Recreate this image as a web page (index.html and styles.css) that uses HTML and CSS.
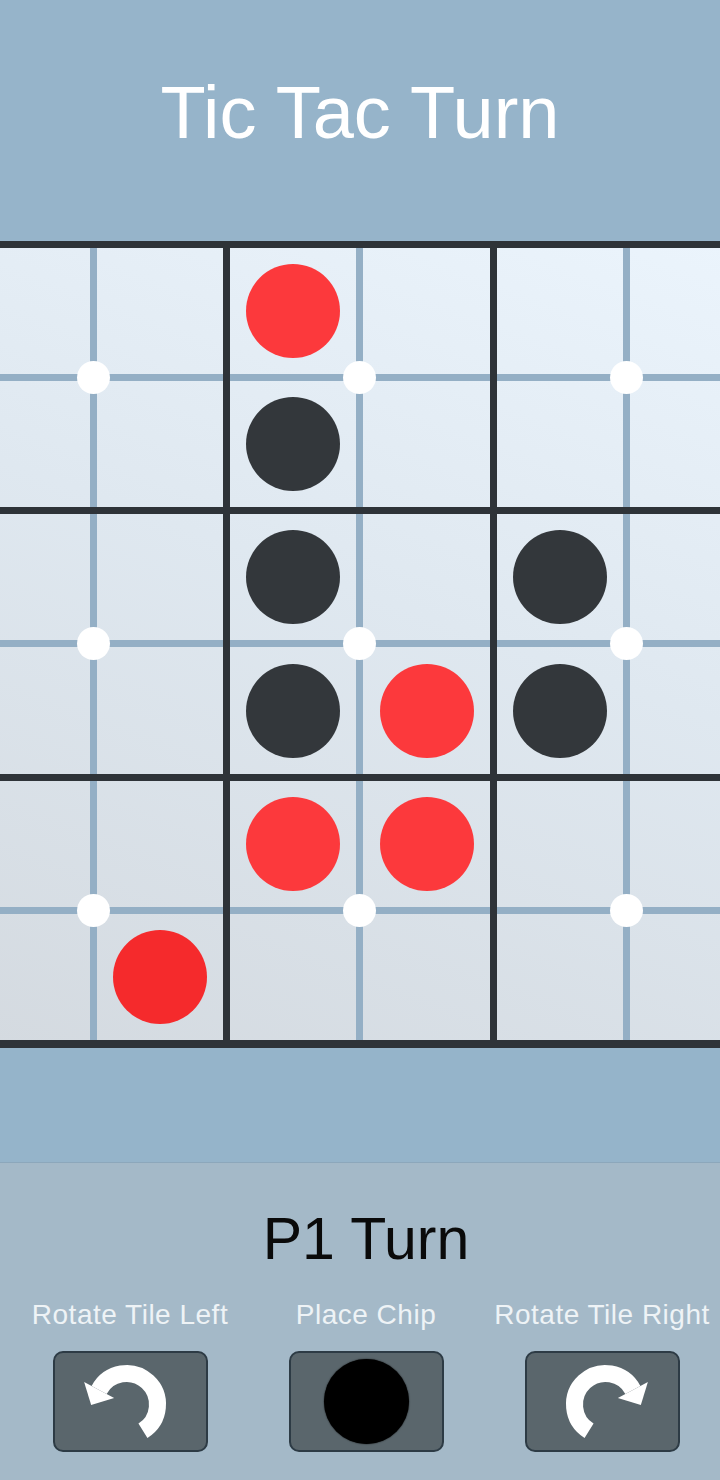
FILE: index.html
```html
<!DOCTYPE html>
<html>
<head>
<meta charset="utf-8">
<title>Tic Tac Turn</title>
<link rel="stylesheet" href="styles.css">
</head>
<body>
<div class="app">
  <header class="header">
    <h1 class="title">Tic Tac Turn</h1>
  </header>

  <div class="board-wrap">
    <div class="board">
      <!-- row 0 -->
      <div class="tile">
        <div class="cell"></div><div class="cell"></div>
        <div class="cell"></div><div class="cell"></div>
        <span class="dot"></span>
      </div>
      <div class="tile">
        <div class="cell"><span class="chip red"></span></div><div class="cell"></div>
        <div class="cell"><span class="chip black"></span></div><div class="cell"></div>
        <span class="dot"></span>
      </div>
      <div class="tile">
        <div class="cell"></div><div class="cell"></div>
        <div class="cell"></div><div class="cell"></div>
        <span class="dot"></span>
      </div>
      <!-- row 1 -->
      <div class="tile">
        <div class="cell"></div><div class="cell"></div>
        <div class="cell"></div><div class="cell"></div>
        <span class="dot"></span>
      </div>
      <div class="tile">
        <div class="cell"><span class="chip black"></span></div><div class="cell"></div>
        <div class="cell"><span class="chip black"></span></div><div class="cell"><span class="chip red"></span></div>
        <span class="dot"></span>
      </div>
      <div class="tile">
        <div class="cell"><span class="chip black"></span></div><div class="cell"></div>
        <div class="cell"><span class="chip black"></span></div><div class="cell"></div>
        <span class="dot"></span>
      </div>
      <!-- row 2 -->
      <div class="tile">
        <div class="cell"></div><div class="cell"></div>
        <div class="cell"></div><div class="cell"><span class="chip red deep"></span></div>
        <span class="dot"></span>
      </div>
      <div class="tile">
        <div class="cell"><span class="chip red"></span></div><div class="cell"><span class="chip red"></span></div>
        <div class="cell"></div><div class="cell"></div>
        <span class="dot"></span>
      </div>
      <div class="tile">
        <div class="cell"></div><div class="cell"></div>
        <div class="cell"></div><div class="cell"></div>
        <span class="dot"></span>
      </div>
    </div>
  </div>

  <div class="band"></div>

  <section class="panel">
    <div class="turn">P1 Turn</div>
    <div class="controls">
      <div class="control">
        <div class="label">Rotate Tile Left</div>
        <button class="btn" type="button" aria-label="Rotate Tile Left">
          <svg class="rot" width="100" height="100" viewBox="0 0 100 100">
            <path d="M62.93 78.79 A31 31 0 1 0 19.13 37.95" fill="none" stroke="#ffffff" stroke-width="17"/>
            <polygon points="4.12,29.98 34.14,45.92 11.16,52.96" fill="#ffffff"/>
          </svg>
        </button>
      </div>
      <div class="control">
        <div class="label">Place Chip</div>
        <button class="btn" type="button" aria-label="Place Chip">
          <span class="place-chip"></span>
        </button>
      </div>
      <div class="control">
        <div class="label">Rotate Tile Right</div>
        <button class="btn" type="button" aria-label="Rotate Tile Right">
          <svg class="rot flip" width="100" height="100" viewBox="0 0 100 100">
            <path d="M62.93 78.79 A31 31 0 1 0 19.13 37.95" fill="none" stroke="#ffffff" stroke-width="17"/>
            <polygon points="4.12,29.98 34.14,45.92 11.16,52.96" fill="#ffffff"/>
          </svg>
        </button>
      </div>
    </div>
  </section>
</div>
</body>
</html>
```

FILE: styles.css
```css
html, body {
  margin: 0;
  padding: 0;
}

body {
  width: 720px;
  height: 1480px;
  overflow: hidden;
  font-family: "Liberation Sans", Arial, sans-serif;
  background: #a4b9c8;
}

.app {
  width: 720px;
  height: 1480px;
  display: flex;
  flex-direction: column;
}

.header {
  height: 240.5px;
  flex: none;
  background: #96b4ca;
  box-sizing: border-box;
  padding-top: 76px;
}

.title {
  margin: 0;
  text-align: center;
  color: #ffffff;
  font-weight: normal;
  font-size: 74px;
  line-height: 74px;
}

.board-wrap {
  width: 720px;
  height: 807px;
  flex: none;
  overflow: hidden;
}

.board {
  width: 807px;
  height: 807px;
  margin-left: -43.5px;
  box-sizing: border-box;
  padding: 7px;
  display: grid;
  grid-template-columns: 1fr 1fr 1fr;
  grid-template-rows: 1fr 1fr 1fr;
  gap: 7px;
  background: #2e3338;
}

.tile {
  position: relative;
  display: grid;
  grid-template-columns: 1fr 1fr;
  grid-template-rows: 1fr 1fr;
  gap: 7px;
  background-image: linear-gradient(200deg, #ebf4fc 0%, #dfe8f0 45%, #d4dae0 100%);
  background-size: 720px 807px;
  background-position: 0 240.5px;
  background-repeat: no-repeat;
  background-attachment: fixed;
}

.tile::before {
  content: "";
  position: absolute;
  top: 0;
  bottom: 0;
  left: 50%;
  width: 7px;
  margin-left: -3.5px;
  background: #94afc5;
}

.tile::after {
  content: "";
  position: absolute;
  left: 0;
  right: 0;
  top: 50%;
  height: 7px;
  margin-top: -3.5px;
  background: #94afc5;
}

.dot {
  position: absolute;
  left: 50%;
  top: 50%;
  width: 33px;
  height: 33px;
  margin: -16.5px 0 0 -16.5px;
  border-radius: 50%;
  background: #ffffff;
  z-index: 2;
}

.cell {
  position: relative;
  z-index: 1;
  display: flex;
  align-items: center;
  justify-content: center;
}

.chip {
  width: 94px;
  height: 94px;
  border-radius: 50%;
}

.chip.red {
  background: #fc393c;
}

.chip.red.deep {
  background: #f52a2c;
}

.chip.black {
  background: #33373b;
}

.band {
  height: 114.5px;
  flex: none;
  background: #95b4ca;
  border-bottom: 1.5px solid #8ca7bb;
}

.panel {
  flex: 1;
  background: #a4b9c8;
  box-sizing: border-box;
  padding-top: 47px;
  padding-left: 12px;
  display: flex;
  flex-direction: column;
}

.turn {
  text-align: center;
  color: #0a0a0a;
  font-size: 59px;
  line-height: 59px;
}

.controls {
  margin-top: 32px;
  display: grid;
  grid-template-columns: repeat(3, 236px);
}

.control {
  display: flex;
  flex-direction: column;
  align-items: center;
}

.label {
  color: #eef3f6;
  font-size: 28px;
  line-height: 28px;
  letter-spacing: 0.5px;
  white-space: nowrap;
}

.btn {
  margin-top: 22px;
  width: 155px;
  height: 101px;
  box-sizing: border-box;
  padding: 0;
  border: 2px solid #2d3b45;
  border-radius: 10px;
  background: #5a666c;
  display: flex;
  align-items: center;
  justify-content: center;
  overflow: visible;
}

.rot {
  display: block;
  flex: none;
}

.flip {
  transform: scaleX(-1);
}

.place-chip {
  display: block;
  flex: none;
  width: 85px;
  height: 85px;
  border-radius: 50%;
  background: #000000;
  box-shadow: 0 0 1.5px #000000;
}
```
